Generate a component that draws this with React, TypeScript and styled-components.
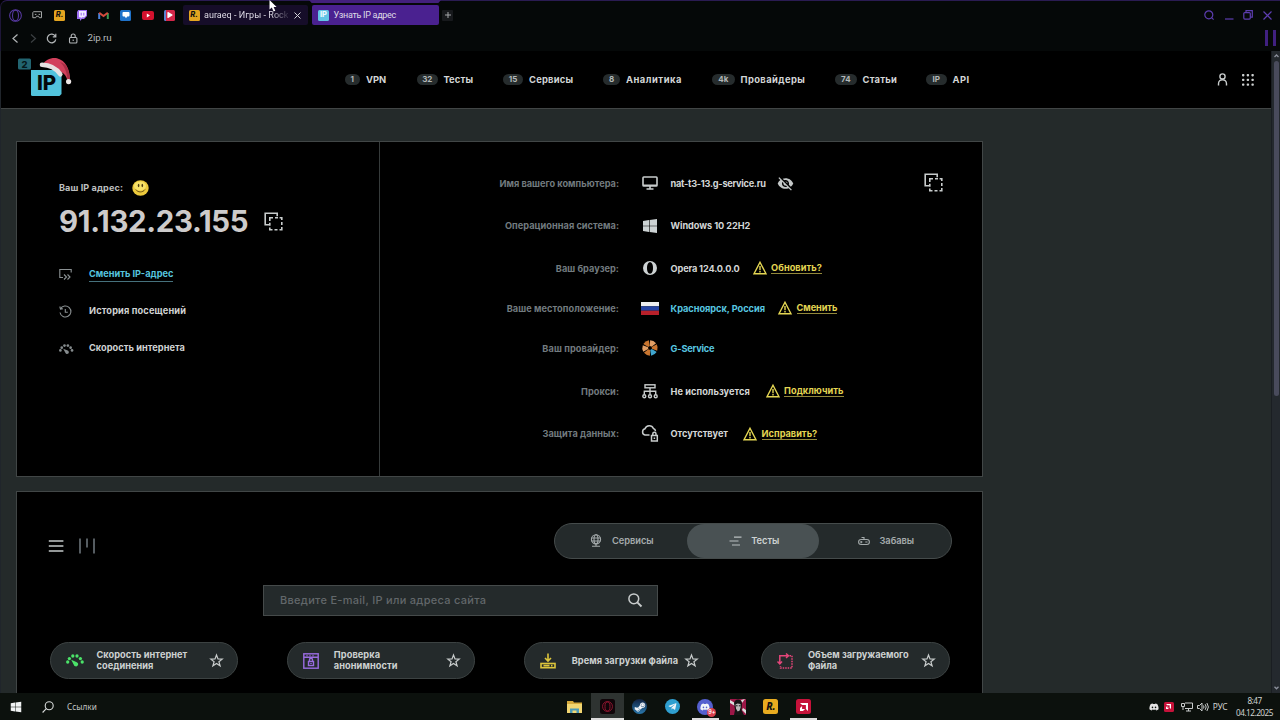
import React from "react";
import styled, { createGlobalStyle } from "styled-components";
import { FaSteamSymbol, FaTelegramPlane, FaDiscord, FaWindows, FaPlay } from "react-icons/fa";
import { MdVisibilityOff } from "react-icons/md";

const Global = createGlobalStyle`
  * { box-sizing: border-box; }
  html, body { margin: 0; background: #000; overflow: hidden; }
  body { font-family: Inter, "Liberation Sans", sans-serif; }
  svg { display: block; flex: none; overflow: visible; }
`;

const Screen = styled.div`
  width: 1280px;
  height: 720px;
  display: flex;
  flex-direction: column;
  background: #000;
  overflow: hidden;
  position: relative;
`;

/* ---------- browser chrome ---------- */
const Chrome = styled.header`
  height: 51px;
  flex: none;
  background: #050808;
  border-left: 1px solid #1e1638;
  border-top: 1px solid #2a1b52;
  border-top-left-radius: 7px;
`;
const TabRow = styled.div`
  height: 28px;
  display: flex;
  align-items: center;
  padding-left: 3px;
`;
const Pinned = styled.div`
  width: 22px;
  height: 20px;
  display: flex;
  align-items: center;
  justify-content: center;
`;
const FirstPinned = styled(Pinned)`
  width: 22.5px;
`;
const Tab = styled.div<{ $active?: boolean }>`
  position: relative;
  width: ${(p) => (p.$active ? 127 : 125.5)}px;
  height: 20px;
  margin-left: ${(p) => (p.$active ? 4 : 2)}px;
  padding-left: 6px;
  border-radius: 2px;
  background: ${(p) => (p.$active ? "#4a2190" : "#160d29")};
  display: flex;
  align-items: center;
  gap: 4.5px;
`;
const TabStrip = styled.i`
  position: absolute;
  left: -3px;
  top: -5px;
  width: 132px;
  height: 3px;
  background: #43207c;
  clip-path: polygon(0 0, 100% 0, 98% 100%, 2% 100%);
`;
const TabTitle = styled.span<{ $fade?: boolean }>`
  font-family: Roboto, sans-serif;
  font-size: 9px;
  line-height: 12px;
  white-space: nowrap;
  width: ${(p) => (p.$fade ? 84 : 90)}px;
  letter-spacing: ${(p) => (p.$fade ? 0.04 : -0.28)}px;
  color: #dedbe6;
  ${(p) => p.$fade && "mask-image: linear-gradient(90deg, #000 80%, #0003 98%);"}
`;
const CloseSlot = styled.span`
  margin-left: 1.5px;
`;
const NewTab = styled.div`
  width: 11px;
  height: 11px;
  margin-left: 3px;
  background: #17191c;
  border-radius: 1px;
  display: flex;
  align-items: center;
  justify-content: center;
`;
const WindowButtons = styled.div`
  margin-left: auto;
  display: flex;
  align-items: center;
  gap: 9.7px;
  padding-right: 8px;
`;
const AddressRow = styled.div`
  height: 18px;
  display: flex;
  align-items: center;
  padding-left: 9px;
  gap: 7px;
`;
const Url = styled.span`
  font-family: Roboto, sans-serif;
  font-size: 9.8px;
  line-height: 12px;
  letter-spacing: -0.1px;
  color: #b5b9bb;
  margin-left: 1.5px;
`;
const SideBars = styled.div`
  width: 11px;
  height: 16px;
  margin-left: auto;
  margin-right: 4px;
  border: solid #402080;
  border-width: 0 3px;
`;

/* ---------- small favicon tiles ---------- */
const Tile = styled.span<{ $bg: string; $fg?: string; $s?: number }>`
  width: ${(p) => p.$s ?? 11}px;
  height: ${(p) => p.$s ?? 11}px;
  border-radius: ${(p) => ((p.$s ?? 11) > 13 ? 2.5 : 1.5)}px;
  background: ${(p) => p.$bg};
  color: ${(p) => p.$fg ?? "#111"};
  display: flex;
  align-items: center;
  justify-content: center;
  flex: none;
  font-size: ${(p) => (p.$s ?? 11) * 0.68}px;
  font-weight: 800;
  font-style: ${(p) => (p.$fg ? "normal" : "italic")};
  line-height: 1;
`;

/* ---------- page ---------- */
const Viewport = styled.div`
  height: 642px;
  flex: none;
  display: flex;
  overflow: hidden;
  border-left: 1px solid #20252b;
`;
const Page = styled.div`
  flex: 1;
  background: #242a2a;
  overflow: hidden;
`;
const ScrollTrack = styled.div`
  width: 9px;
  background: #24292e;
  border-left: 1px solid #1a1e22;
  display: flex;
  flex-direction: column;
  align-items: center;
  justify-content: space-between;
  padding: 3px 0 3px;
`;
const Thumb = styled.div`
  width: 5px;
  height: 335px;
  border-radius: 3px;
  background: #494b5c;
  margin: 3px 0 auto;
`;
const SiteHeader = styled.div`
  height: 58px;
  background: #000;
  border-bottom: 1px solid #414545;
  display: flex;
  align-items: center;
`;
const LogoSlot = styled.div`
  width: 343.5px;
  padding: 0 0 4px 16px;
`;
const Nav = styled.nav`
  display: flex;
  flex: 1;
`;
const NavItem = styled.a<{ $w: number; $ls: number }>`
  width: ${(p) => p.$w}px;
  display: flex;
  align-items: center;
  gap: 6px;
  font-weight: 700;
  font-size: 9.4px;
  line-height: 12px;
  letter-spacing: ${(p) => p.$ls}px;
  color: #d3d6d6;
  white-space: nowrap;
`;
const Count = styled.span<{ $w: number }>`
  width: ${(p) => p.$w}px;
  height: 11px;
  border-radius: 6px;
  background: #262c2d;
  color: #b3b8b8;
  font-size: 8px;
  line-height: 11.5px;
  text-align: center;
  letter-spacing: 0;
`;
const HeaderTools = styled.div`
  display: flex;
  align-items: center;
  gap: 14px;
  padding-right: 17px;
`;

const Main = styled.main`
  width: 967px;
  margin: 32px 0 0 15px;
  display: flex;
  flex-direction: column;
  gap: 14px;
`;
const InfoCard = styled.section`
  height: 336px;
  background: #000;
  border: 1px solid #414646;
  display: flex;
`;
const IpPane = styled.div`
  width: 363px;
  border-right: 1px solid #363b3b;
  padding: 36.5px 0 0 42px;
`;
const IpCaption = styled.div`
  display: flex;
  align-items: center;
  gap: 9.3px;
  height: 18px;
  font-size: 9.1px;
  font-weight: 700;
  letter-spacing: 0.1px;
  color: #bcbfbf;
  white-space: nowrap;
`;
const IpRow = styled.div`
  display: flex;
  align-items: center;
  height: 50px;
`;
const IpValue = styled.h1`
  margin: 0;
  width: 205px;
  font-size: 29.4px;
  line-height: 40px;
  font-weight: 700;
  letter-spacing: -0.3px;
  color: #cdcbcb;
  white-space: nowrap;
`;
const ActionList = styled.div`
  padding-top: 9px;
`;
const Action = styled.div`
  height: 37.4px;
  display: flex;
  align-items: center;
`;
const ActionIcon = styled.div`
  width: 30px;
`;
const ActionText = styled.span<{ $link?: boolean; $ls: number }>`
  font-size: 9.2px;
  line-height: 14px;
  font-weight: 700;
  letter-spacing: ${(p) => p.$ls}px;
  color: ${(p) => (p.$link ? "#56c5df" : "#d0d3d3")};
  border-bottom: 1px solid ${(p) => (p.$link ? "#46717c" : "transparent")};
  white-space: nowrap;
`;

const DetailPane = styled.div`
  flex: 1;
  display: flex;
  padding-top: 20px;
`;
const Details = styled.div`
  width: 543.5px;
`;
const CopyAll = styled.div`
  padding-top: 10.5px;
`;
const Detail = styled.div<{ $h: number }>`
  height: ${(p) => p.$h}px;
  display: flex;
  align-items: center;
  white-space: nowrap;
  font-size: 9.2px;
  line-height: 13px;
  font-weight: 700;
`;
const Key = styled.span<{ $ls: number }>`
  width: 239px;
  text-align: right;
  color: #727b7f;
  letter-spacing: ${(p) => p.$ls}px;
`;
const DetailIcon = styled.span`
  width: 20px;
  margin: 0 11px 0 20.6px;
  display: flex;
  justify-content: center;
`;
const Value = styled.span<{ $link?: boolean; $ls: number; $w: number }>`
  width: ${(p) => p.$w}px;
  color: ${(p) => (p.$link ? "#58c7e0" : "#d3d6d6")};
  letter-spacing: ${(p) => p.$ls}px;
`;
const Warn = styled.span<{ $ls: number }>`
  color: #e4d653;
  border-bottom: 1px solid #93893b;
  margin-left: 4.5px;
  line-height: 11px;
  letter-spacing: ${(p) => p.$ls}px;
`;

const ToolsCard = styled.section`
  height: 240px;
  background: #000;
  border: 1px solid #414646;
  padding: 31px 30px 0 31px;
`;
const ToolsTop = styled.div`
  display: flex;
  justify-content: space-between;
  height: 36px;
`;
const ViewIcons = styled.div`
  display: flex;
  gap: 15px;
  padding-top: 15px;
`;
const Segments = styled.div`
  width: 398px;
  height: 36px;
  border-radius: 18px;
  border: 1px solid #454b4b;
  background: #242a2b;
  display: flex;
`;
const Segment = styled.div<{ $on?: boolean }>`
  flex: 1;
  border-radius: 18px;
  background: ${(p) => (p.$on ? "#495153" : "transparent")};
  color: ${(p) => (p.$on ? "#cdd1d1" : "#a4aaab")};
  display: flex;
  align-items: center;
  justify-content: center;
  gap: 9.5px;
  font-size: 9.3px;
  letter-spacing: -0.05px;
  font-weight: 600;
  padding: 0 0 1px 2px;
`;
const Search = styled.div`
  width: 395px;
  height: 31px;
  margin: 26px 0 0 214.5px;
  background: #242a2b;
  border: 1px solid #454a4a;
  display: flex;
  align-items: center;
  justify-content: space-between;
  padding: 0 15px 1px 16.5px;
  font-size: 11px;
  font-weight: 500;
  letter-spacing: 0.29px;
  color: #62676a;
`;
const ToolGrid = styled.div`
  display: flex;
  justify-content: space-between;
  width: 900.5px;
  margin: 26px 0 0 1.5px;
`;
const Tool = styled.div`
  width: 188.5px;
  height: 37px;
  border-radius: 19px;
  background: #242a2b;
  border: 1px solid #3c4242;
  display: flex;
  align-items: center;
  padding-left: 15px;
`;
const ToolIcon = styled.div`
  width: 18px;
`;
const ToolText = styled.div<{ $pad: number; $ls: number }>`
  width: 126.5px;
  padding: 1px 0 0 ${(p) => p.$pad}px;
  font-size: 9.2px;
  line-height: 10.6px;
  font-weight: 700;
  letter-spacing: ${(p) => p.$ls}px;
  white-space: pre;
  color: #ced2d2;
`;

/* ---------- taskbar ---------- */
const Taskbar = styled.footer`
  height: 27px;
  background: #0c110d;
  display: flex;
  align-items: stretch;
  font-family: "Noto Sans", sans-serif;
`;
const TaskStart = styled.div`
  width: 558px;
  display: flex;
  align-items: center;
  padding-left: 10px;
  font-size: 8.2px;
  color: #c4c7c5;
`;
const TaskSearch = styled.span`
  margin: 0 13px 0 20px;
`;
const TaskApp = styled.div<{ $on?: boolean; $open?: boolean }>`
  width: 32.75px;
  display: flex;
  align-items: center;
  justify-content: center;
  background: ${(p) => (p.$on ? "#2e3331" : "transparent")};
  box-shadow: ${(p) => (p.$on ? "inset 0 -2px #dcdcdc" : "none")};
  position: relative;
  &::after {
    content: "";
    display: ${(p) => (p.$open ? "block" : "none")};
    position: absolute;
    left: 3px;
    right: 3px;
    bottom: 0;
    height: 2px;
    background: #dcdcdc;
  }
`;
const Round = styled.span<{ $bg: string; $s?: number }>`
  width: ${(p) => p.$s ?? 15}px;
  height: ${(p) => p.$s ?? 15}px;
  border-radius: 50%;
  background: ${(p) => p.$bg};
  color: #f1f4f8;
  display: flex;
  align-items: center;
  justify-content: center;
  position: relative;
`;
const Badge = styled.i`
  position: absolute;
  right: -3px;
  bottom: -2px;
  width: 9px;
  height: 9px;
  border-radius: 50%;
  background: #d9404e;
  color: #fff;
  font: 600 5.5px/9px Inter, sans-serif;
  text-align: center;
`;
const Tray = styled.div`
  margin-left: auto;
  display: flex;
  align-items: center;
  gap: 4px;
  color: #d0d3d1;
  font-size: 8px;
`;
const TrayApps = styled.div`
  display: flex;
  gap: 5px;
  margin-right: 3px;
`;
const Clock = styled.div`
  width: 38px;
  margin: 0 6.5px 0 4px;
  text-align: center;
  white-space: nowrap;
  line-height: 11.5px;
  font-size: 8.2px;
  letter-spacing: -0.5px;
`;
const Lang = styled.span`
  font-size: 8.4px;
  letter-spacing: -0.1px;
`;
const Cursor = styled.svg`
  position: absolute;
  left: 269px;
  top: 0;
`;

/* ---------- drawings ---------- */
type SvgProps = React.SVGProps<SVGSVGElement>;
const Ico = ({ w = 16, h, box = 16, c = "#c8cccc", sw = 1.4, children, ...r }: { w?: number; h?: number; box?: number | string; c?: string; sw?: number; children: React.ReactNode } & SvgProps) => (
  <svg width={w} height={h ?? w} viewBox={typeof box === "string" ? box : `0 0 ${box} ${box}`} fill="none" stroke={c} strokeWidth={sw} {...r}>
    {children}
  </svg>
);
const LockIcon = styled(Ico)`
  margin-left: 4px;
`;
const Copy = () => (
  <Ico w={19} box={19} sw={1.6}>
    <path d="M5 12.8H1.2V1.2h12v3" />
    <path d="M5.800 9V5.700H9M11 5.700h3M15.600 5.700H17.800V8M17.800 10v3M17.800 15v2.800H15.500M13.500 17.800h-3M8.500 17.800H5.800V15.500M5.800 13.800v-3" />
  </Ico>
);
const Gauge = ({ w, c }: { w: number; c: string }) => (
  <svg width={w} height={w * 0.7} viewBox="0 0 18 12.6" fill={c}>
    <circle cx="1.700" cy="8" r="1.650" />
    <circle cx="3.400" cy="4.600" r="1.650" />
    <circle cx="6.800" cy="2" r="1.650" />
    <circle cx="11.000" cy="2" r="1.650" />
    <circle cx="14.400" cy="4.600" r="1.650" />
    <circle cx="16.200" cy="8" r="1.650" />
    <path d="M5.200 5.800L10.800 8.200a2.200 2.200 0 1 1-2.900 2.700z" />
  </svg>
);
const Triangle = () => (
  <Ico w={14} box={14} c="#e4d653" sw={1.4}>
    <path d="M7 1.200L13 12.800H1z" />
    <path d="M7 5v4.200M7 10.100v1.400" />
  </Ico>
);
const Star = () => (
  <Ico w={13} box={13} sw={1.2}>
    <path d="M6.500 1l1.500 3.900 4.200.2-3.300 2.600 1.200 4.100-3.600-2.400-3.600 2.400 1.200-4.100L.8 5.100l4.200-.2z" />
  </Ico>
);
const AmdArrow = ({ s }: { s: number }) => (
  <svg width={s} height={s} viewBox="0 0 8 8" fill="#fff">
    <path d="M0 0h8v8L5.900 5.900V2.100H2.100z" />
    <path d="M2.100 2.900L0 5v3h3l2.100-2.100h-3z" />
  </svg>
);
const Logo = () => (
  <svg width="56" height="42" viewBox="0 0 56 42">
    <rect x="1" y="1.500" width="13" height="11" rx="1.500" fill="#226470" />
    <text x="7.500" y="10.500" textAnchor="middle" fontSize="9.500" fontWeight="800" fill="#06181c">2</text>
    <path d="M14 13h30.500v24l-2 2h-27a1.500 1.500 0 0 1-1.500-1.500z" fill="#52c3dc" />
    <text x="29.500" y="33.200" textAnchor="middle" fontSize="20.500" fontWeight="800" fill="#04080a">IP</text>
    <path d="M26 8C28 2.500 34 .5 40 1.200 49 3.500 52.500 12 53 22l-2.600 1.200c-1-4-3-6.500-5.800-8z" fill="#d2405c" />
    <path d="M43 5c4 3.500 7 9.500 7.500 18l2.500-1.200C52.500 13 50 7 43 5z" fill="#a92e45" />
    <path d="M25 7.800c8 .2 14.500 4 18.300 9.500" stroke="#e6e0e1" strokeWidth="4.600" strokeLinecap="round" fill="none" />
    <circle cx="51.600" cy="24.600" r="2.600" fill="#ece6e6" />
  </svg>
);
const OperaO = ({ c, s = 13 }: { c: string; s?: number }) => (
  <Ico w={s} box={14} c={c} sw={1.1}>
    <circle cx="7" cy="7" r="6.300" />
    <ellipse cx="7" cy="7" rx="3.200" ry="5.700" />
  </Ico>
);
const Chevron = ({ down }: { down?: boolean }) => (
  <Ico w={5} h={4} box="0 0 5 4" c="#8c909c" sw={1.3}>
    <path d={down ? "M.5 .8l2 2 2-2" : "M.5 3l2-2 2 2"} />
  </Ico>
);
const sectors = [
  { r: 26, c: "#e3a066" },
  { r: 86, c: "#c9752f" },
  { r: 146, c: "#3fa5ce" },
  { r: 206, c: "#c9752f" },
  { r: 266, c: "#e3a066" },
  { r: 326, c: "#c9752f" },
];

const pinned = [
  <Ico w={11} h={8} box="0 0 11 8" c="#a3a6a6" sw={1}><path d="M1.500 .7h8v6H7.300L6.500 5.200h-2L3.700 6.700H.8v-5z" /><path d="M2.800 3.400h1.600M6.600 3.400h1.600" /></Ico>,
  <Tile $bg="#e5a520">R.</Tile>,
  <svg width="11" height="11" viewBox="0 0 11 11"><path d="M2.200 0H11v6L8 9H5.800L4 11V9H1V2z" fill="#9c6df0" /><path d="M3 1h7v4.600L8.300 7.300H6L4.800 8.500V7.300H3z" fill="#f2ecff" /><path d="M5.200 2.800v2.600M7.800 2.800v2.600" stroke="#9c6df0" strokeWidth="1.100" /></svg>,
  <Ico w={11} h={9} box="0 0 11 9" sw={2}><path d="M1.200 8V2" stroke="#4a83db" /><path d="M9.800 8V2" stroke="#3a9b52" /><path d="M1.200 1.800L5.500 5l4.300-3.200" stroke="#d54b3d" /></Ico>,
  <Tile $bg="#1f72c9" $fg="#fff"><svg width="8" height="8" viewBox="0 0 8 8" fill="#fff"><path d="M1.500 1h5a1 1 0 0 1 1 1v2.500a1 1 0 0 1-1 1H5.200L4 7.200 2.800 5.500H1.500a1 1 0 0 1-1-1V2a1 1 0 0 1 1-1z" /></svg></Tile>,
  <svg width="12" height="9" viewBox="0 0 12 9"><rect width="12" height="9" rx="2" fill="#d3122e" /><path d="M4.800 2.600v3.800L8 4.500z" fill="#fff" /></svg>,
  <Tile $bg="linear-gradient(90deg,#5d83d2 18%,#d42649 22%)" $fg="#fff"><FaPlay size={6} /></Tile>,
];

const nav = [
  { n: "1", t: "VPN", w: 72.5, p: 15.5, ls: 0 },
  { n: "32", t: "Тесты", w: 86, p: 20.5, ls: 0.1 },
  { n: "15", t: "Сервисы", w: 100, p: 20, ls: 0.22 },
  { n: "8", t: "Аналитика", w: 109, p: 17, ls: 0.5 },
  { n: "4k", t: "Провайдеры", w: 123, p: 22.5, ls: 0.4 },
  { n: "74", t: "Статьи", w: 91, p: 21.5, ls: 0.2 },
  { n: "IP", t: "API", w: 60, p: 20.5, ls: 0.5 },
];

const details = [
  { h: 42.5, k: "Имя вашего компьютера:", kl: 0.02, v: "nat-t3-13.g-service.ru", vl: -0.27, vw: 106.5, eye: true,
    i: <Ico w={16} h={14} box="0 0 16 14" sw={1.6}><rect x="1" y="1" width="14" height="9" rx=".8" /><path d="M1 9.300h14M8 10v3M4.500 13h7" /></Ico> },
  { h: 42.5, k: "Операционная система:", kl: 0.03, v: "Windows 10 22H2", vl: -0.08, vw: 90,
    i: <svg width="14" height="14" viewBox="0 0 14 14" fill="#ccd2d3"><path d="M0 2l6-.9v5.600H0zM6.600 1L14 0v6.700H6.600zM0 7.300h6v5.600L0 12zM6.600 7.300H14V14l-7.400-1z" /></svg> },
  { h: 42.5, k: "Ваш браузер:", kl: 0.05, v: "Opera 124.0.0.0", vl: -0.16, vw: 82, a: "Обновить?", al: 0.05,
    i: <svg width="14" height="14" viewBox="0 0 14 14" fill="#cdd2d3" fillRule="evenodd"><path d="M7 0a7 7 0 1 0 0 14A7 7 0 0 0 7 0zm0 1.300c2 0 3 2.600 3 5.700s-1 5.700-3 5.700S4 10.100 4 7s1-5.700 3-5.700z" /></svg> },
  { h: 37.5, k: "Ваше местоположение:", kl: 0.07, v: "Красноярск, Россия", vl: -0.02, vw: 107.5, link: true, a: "Сменить", al: -0.08,
    i: <svg width="18" height="13" viewBox="0 0 18 13"><path fill="#eee" d="M0 0h18v4.300H0z" /><path fill="#2645a4" d="M0 4.300h18v4.400H0z" /><path fill="#b8202a" d="M0 8.700h18V13H0z" /></svg> },
  { h: 42.5, k: "Ваш провайдер:", kl: 0.09, v: "G-Service", vl: -0.2, vw: 60, link: true,
    i: <svg width="16" height="16" viewBox="-8 -8 16 16">{sectors.map((s) => <path key={s.r} d="M-1-1.800L-3.300-7Q0-8.400 3.300-7L1-1.800z" transform={`rotate(${s.r})`} fill={s.c} />)}</svg> },
  { h: 43.5, k: "Прокси:", kl: 0.05, v: "Не используется", vl: 0.05, vw: 95, a: "Подключить", al: 0.04,
    i: <Ico w={16} h={15} box="0 0 16 15" sw={1.4}><rect x="3" y=".8" width="10" height="3" /><path d="M8 4v6.500M2.300 10.500V7.300h11.400v3.200" /><circle cx="2.300" cy="12.300" r="1.500" /><circle cx="8" cy="12.300" r="1.500" /><circle cx="13.700" cy="12.300" r="1.500" /></Ico> },
  { h: 41.5, k: "Защита данных:", kl: 0.04, v: "Отсутствует", vl: -0.05, vw: 72.5, a: "Исправить?", al: 0,
    i: <Ico w={17} h={17} box="0 0 17 17" sw={1.5}><path d="M8.500 10H4a3.200 3.200 0 0 1 0-6.200A4.500 4.500 0 0 1 12.400 3.500 3 3 0 0 1 14.500 6.300" /><rect x="10.500" y="10.500" width="5.800" height="5.500" /><path d="M11.800 10V8.800a1.600 1.600 0 0 1 3.200 0V10M13.400 12.500v1.500" /></Ico> },
];

const tools = [
  { t: "Скорость интернет\nсоединения", p: 13, ls: 0.06, i: <Gauge w={18} c="#4be369" /> },
  { t: "Проверка\nанонимности", p: 13, ls: 0.09, i: <Ico w={16} c="#9a6ce0" sw={1.4}><rect x=".8" y=".8" width="14.400" height="14.400" /><path d="M1 4.300h14M3.500 2.500h1M6.500 2.500h1M9.500 2.500h1" /><rect x="5.500" y="8.500" width="5" height="4" /><path d="M6.500 8V6.800a1.500 1.500 0 0 1 3 0V8M8 10v1" /></Ico> },
  { t: "Время загрузки файла", p: 13.5, ls: 0.08, i: <Ico w={16} c="#dcc53c" sw={1.6}><path d="M8 .5v7M5 5l3 3 3-3" /><rect x="1" y="10.500" width="14" height="4.200" /><path d="M3.500 12.600h6M11 12.600h1.500" /></Ico> },
  { t: "Объем загружаемого\nфайла", p: 12.5, ls: -0.02, i: <Ico w={16} c="#e4467a" sw={1.5}><path d="M2.800 10.500V2.800H11M9 .5l2.500 2.300L9 5M.5 8.500l2.300 2.500L5 8.500" /><path d="M12.500 2.800H15V15H3.500v-2" strokeDasharray="1.500 1" /></Ico> },
];

export default function App() {
  return (
    <Screen>
      <Global />
      <Chrome>
        <TabRow>
          <FirstPinned><OperaO c="#5a3ba6" /></FirstPinned>
          {pinned.map((p, n) => <Pinned key={n}>{p}</Pinned>)}
          <Tab>
            <Tile $bg="#e5a520">R.</Tile>
            <TabTitle $fade>auraeq - Игры - Rock</TabTitle>
            <CloseSlot><Ico w={7} box={7} c="#d2d2d8" sw={1}><path d="M.5.5l6 6M6.500.5l-6 6" /></Ico></CloseSlot>
          </Tab>
          <Tab $active>
            <TabStrip />
            <Tile $bg="#62c5e6" $fg="#eafaff">IP</Tile>
            <TabTitle>Узнать IP адрес</TabTitle>
          </Tab>
          <NewTab><Ico w={6} box={6} c="#a6a8aa" sw={1}><path d="M3 0v6M0 3h6" /></Ico></NewTab>
          <WindowButtons>
            <Ico w={10} box={10} c="#5d3db0" sw={1.2}><circle cx="4.800" cy="4.800" r="4" /><path d="M7.600 7.600l2 2" /></Ico>
            <Ico w={10} box={10} c="#5d3db0" sw={1.2}><path d="M1 9h8.500" /></Ico>
            <Ico w={10} box={10} c="#5d3db0" sw={1.2}><rect x=".8" y="2.600" width="6.500" height="6.500" rx="1" /><path d="M3 2.400V.7h6.300v6.500H7.600" /></Ico>
            <Ico w={9} box={9} c="#5d3db0" sw={1.2}><path d="M.5.5l8 8M8.500.5l-8 8" /></Ico>
          </WindowButtons>
        </TabRow>
        <AddressRow>
          <Ico w={11} box={11} c="#b2b5b7" sw={1.2}><path d="M7.500 1.500l-4.500 4 4.500 4" /></Ico>
          <Ico w={11} box={11} c="#3c4043" sw={1.2}><path d="M3 1.500l4.500 4-4.500 4" /></Ico>
          <Ico w={11} box={11} c="#b2b5b7" sw={1.2}><path d="M9.300 3.300A4.300 4.300 0 1 0 9.800 6.300M9.800.8v3H6.800" /></Ico>
          <LockIcon w={11} box={11} c="#b2b5b7" sw={1.1}><rect x="1.500" y="4.500" width="7.400" height="5.500" rx="1" /><path d="M3.200 4.500V3a2 2 0 0 1 4 0v1.500M5.200 6.500v1.500" /></LockIcon>
          <Url>2ip.ru</Url>
          <SideBars />
        </AddressRow>
      </Chrome>

      <Viewport>
        <Page>
          <SiteHeader>
            <LogoSlot><Logo /></LogoSlot>
            <Nav>
              {nav.map((x) => (
                <NavItem key={x.t} $w={x.w} $ls={x.ls}><Count $w={x.p}>{x.n}</Count>{x.t}</NavItem>
              ))}
            </Nav>
            <HeaderTools>
              <Ico w={11} h={13} box="0 0 11 14" sw={1.5}><circle cx="5.500" cy="3.700" r="2.800" /><path d="M1.200 13.500v-2a4.300 4.300 0 0 1 8.600 0v2" /></Ico>
              <svg width="12" height="12" viewBox="0 0 12 12" fill="#cdd0d0">
                {[0, 4.7, 9.4].flatMap((y) => [0, 4.7, 9.4].map((x) => <rect key={`${x}-${y}`} x={x} y={y} width="2.400" height="2.400" rx=".8" />))}
              </svg>
            </HeaderTools>
          </SiteHeader>

          <Main>
            <InfoCard>
              <IpPane>
                <IpCaption>
                  Ваш IP адрес:
                  <svg width="17" height="16" viewBox="0 0 17 16"><ellipse cx="8.500" cy="8" rx="8.200" ry="7.700" fill="#ecc93c" /><ellipse cx="8" cy="6" rx="6" ry="4.500" fill="#f7e268" /><ellipse cx="6.600" cy="5.500" rx=".8" ry="1.700" fill="#4c3a10" /><ellipse cx="10.300" cy="5.500" rx=".8" ry="1.700" fill="#4c3a10" /><path d="M3.800 9.500c2 3.200 7 3.200 9.200 0" fill="none" stroke="#6a5012" /></svg>
                </IpCaption>
                <IpRow><IpValue>91.132.23.155</IpValue><Copy /></IpRow>
                <ActionList>
                  <Action>
                    <ActionIcon><Ico w={13} box={13} c="#8b9193" sw={1.1}><path d="M4 9.500H.8V1.500h11.400V4.500" /><path d="M5 6.500l2.500 2.500L5 11.500M8.500 6.500L11 9l-2.500 2.500" /></Ico></ActionIcon>
                    <ActionText $link $ls={0}>Сменить IP-адрес</ActionText>
                  </Action>
                  <Action>
                    <ActionIcon><Ico w={13} box={13} c="#8b9193" sw={1.1}><path d="M1.500 4A5.500 5.500 0 1 1 1 7.500M.8 1.500L1.500 4.200 4 3.800M6.300 4v3.200h2.500" /></Ico></ActionIcon>
                    <ActionText $ls={0.16}>История посещений</ActionText>
                  </Action>
                  <Action>
                    <ActionIcon><Gauge w={14.5} c="#858b8d" /></ActionIcon>
                    <ActionText $ls={0.05}>Скорость интернета</ActionText>
                  </Action>
                </ActionList>
              </IpPane>
              <DetailPane>
                <Details>
                  {details.map((d) => (
                    <Detail key={d.k} $h={d.h}>
                      <Key $ls={d.kl}>{d.k}</Key>
                      <DetailIcon>{d.i}</DetailIcon>
                      <Value $link={d.link} $ls={d.vl} $w={d.vw}>{d.v}</Value>
                      {d.eye && <MdVisibilityOff size={17} color="#c4c8c8" />}
                      {d.a && <><Triangle /><Warn $ls={d.al ?? 0}>{d.a}</Warn></>}
                    </Detail>
                  ))}
                </Details>
                <CopyAll><Copy /></CopyAll>
              </DetailPane>
            </InfoCard>

            <ToolsCard>
              <ToolsTop>
                <ViewIcons>
                  <Ico w={16} box={16} sw={1.4} c="#c4c9c9"><path d="M.8 3h14.600M.8 8h14.600M.8 13h14.600" /></Ico>
                  <Ico w={16} box={16} sw={1.4} c="#79838a"><path d="M1 .5v15M8 .5v9M15 .5v15" /></Ico>
                </ViewIcons>
                <Segments>
                  <Segment><Ico w={12} h={13} box="0 0 12 13" c="#a4aaab" sw={1.1}><circle cx="6" cy="5.300" r="4.600" /><ellipse cx="6" cy="5.300" rx="2" ry="4.600" /><path d="M1.500 4h9M1.500 7h9M6 10v2M2 12.300h8" /></Ico>Сервисы</Segment>
                  <Segment $on><Ico w={13} h={10} box="0 0 13 10" c="#bac0c1" sw={1.2}><path d="M5 1.200h7.500M.5 5h9M3 9h8" /></Ico>Тесты</Segment>
                  <Segment><Ico w={12} h={11} box="0 0 12 11" c="#a4aaab" sw={1.1}><rect x=".6" y="4.500" width="10.800" height="5" rx="2.500" /><path d="M3.200 6v2.200M2.200 7h2.200M7.300 7h2.200M6 4.500V2.500h-2.500" /></Ico>Забавы</Segment>
                </Segments>
              </ToolsTop>
              <Search>
                Введите E-mail, IP или адреса сайта
                <Ico w={14} box={14} sw={1.5}><circle cx="5.800" cy="5.800" r="4.900" /><path d="M9.300 9.300l4.200 4.200" strokeWidth="1.900" /></Ico>
              </Search>
              <ToolGrid>
                {tools.map((x) => (
                  <Tool key={x.t}><ToolIcon>{x.i}</ToolIcon><ToolText $pad={x.p} $ls={x.ls}>{x.t}</ToolText><Star /></Tool>
                ))}
              </ToolGrid>
            </ToolsCard>
          </Main>
        </Page>
        <ScrollTrack><Chevron /><Thumb /><Chevron down /></ScrollTrack>
      </Viewport>

      <Taskbar>
        <TaskStart>
          <FaWindows size={12} color="#f0f2f2" />
          <TaskSearch><Ico w={12} box={12} sw={1.1} c="#d8dbda"><circle cx="7.200" cy="4.800" r="4" /><path d="M4.300 7.700L.6 11.500" /></Ico></TaskSearch>
          Ссылки
        </TaskStart>
        <TaskApp><svg width="15" height="12" viewBox="0 0 15 12"><path d="M0 0h6l1 1.500h8V11H0z" fill="#d6aa3c" /><path d="M0 3h15v9H0z" fill="#f2d672" /><path d="M3 12V7.500h9V12h-2.500V9.500h-4V12z" fill="#4c9bb8" /></svg></TaskApp>
        <TaskApp $on><Tile $bg="#100509" $fg="#c21a3c" $s={15}><OperaO c="#9c1733" s={11} /></Tile></TaskApp>
        <TaskApp><Round $bg="linear-gradient(#10203f,#2a78ac)"><FaSteamSymbol size={12} /></Round></TaskApp>
        <TaskApp><Round $bg="#2f9fd0"><FaTelegramPlane size={9} /></Round></TaskApp>
        <TaskApp $open><Round $bg="#5560cf" $s={16}><FaDiscord size={10} /><Badge>9+</Badge></Round></TaskApp>
        <TaskApp>
          <svg width="16" height="16" viewBox="0 0 16 16">
            <path fill="#9c1747" d="M0 0h16v16H0z" />
            <path fill="#ddd" d="M0 1l5 3v3L0 4zM16 15l-4-4 1-2 3 2zM11 1l4-1-3 4z" />
            <path fill="#141414" d="M4 4q1-4 4.500-3.500T12 5l-.5 6 2.500 5H4l1-5z" />
            <path fill="#b9b9b9" d="M5.500 5.500l2-1 3 .5.2 3-1 3.500-2 1-1.700-3z" />
            <path stroke="#141414" d="M6 6.800h1.600M8.800 6.800h1.600" />
          </svg>
        </TaskApp>
        <TaskApp><Tile $bg="#e9ac20" $s={15}>R.</Tile></TaskApp>
        <TaskApp $open><Tile $bg="#c6123a" $fg="#fff" $s={15}><AmdArrow s={8} /></Tile></TaskApp>
        <Tray>
          <TrayApps>
            <FaDiscord size={10} color="#e4e4e4" />
            <Tile $bg="#c6123a" $fg="#fff" $s={10}><AmdArrow s={5} /></Tile>
          </TrayApps>
          <Ico w={12} h={10} box="0 0 12 10" sw={1}><path d="M4 1h7.500v5.500H4M7.500 6.500v2.500M5 9h5M.5 1.500h3v3h-3zM2 4.500V8" /></Ico>
          <Ico w={12} h={10} box="0 0 12 10" sw={1}><path d="M.5 3.500h2L5 1v8L2.500 6.500h-2zM6.500 3.500q1 1.500 0 3M8.200 2.200q2 2.800 0 5.600M9.900 1q3 4 0 8" /></Ico>
          <Lang>РУС</Lang>
          <Clock>8:47<br />04.12.2025</Clock>
        </Tray>
      </Taskbar>
      <Cursor width="9" height="13" viewBox="0 0 9 13"><path d="M.5 0v9.500l2.300-2 1.800 4 1.700-.8-1.700-3.800h3z" fill="#fff" /></Cursor>
    </Screen>
  );
}
